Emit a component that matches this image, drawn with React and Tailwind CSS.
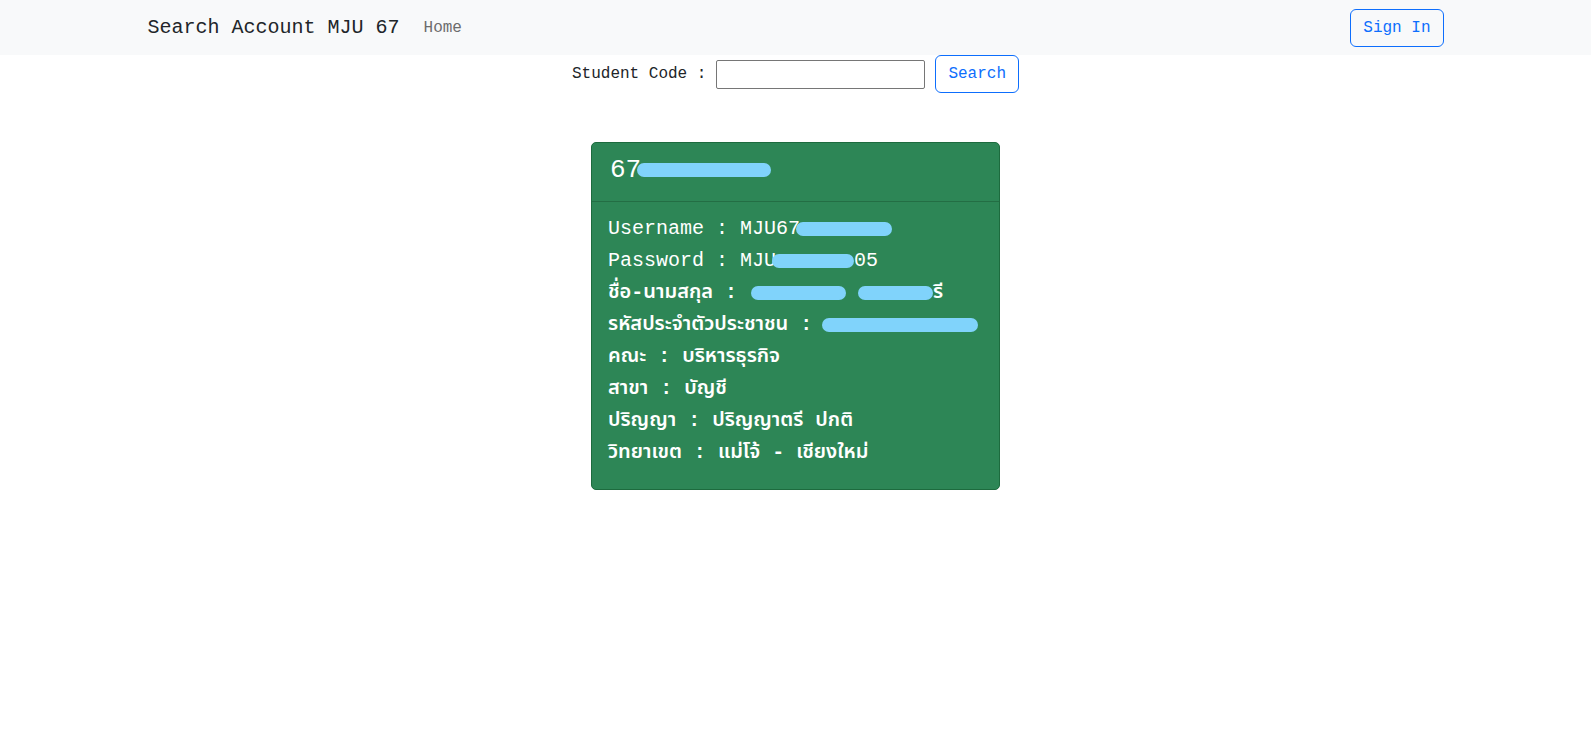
export default function App() {
  const mono = "font-['Liberation_Mono','Noto_Sans_Thai','Noto_Sans','DejaVu_Sans',monospace]";
  const Pill = ({ w, ml = 0 }) => (
    <span
      className="inline-block h-[14px] rounded-full bg-[#80d3fb] align-middle"
      style={{ width: w, marginLeft: ml }}
    />
  );

  return (
    <div className={`min-h-screen bg-white ${mono}`}>
      <nav className="bg-[#f8f9fa] h-[55px]">
        <div className="max-w-[1320px] mx-auto px-3 h-full flex items-center justify-between">
          <div className="flex items-center">
            <span className="text-[20px] text-[#212529]">Search Account MJU 67</span>
            <span className="ml-[24px] text-[16px] text-[#6c6c6c]">Home</span>
          </div>
          <button className="h-[38px] px-3 border border-[#0d6efd] rounded-[6px] text-[16px] text-[#0d6efd]">
            Sign In
          </button>
        </div>
      </nav>

      <div className="flex justify-center items-center gap-[10px]">
        <span className="text-[16px] text-[#212529]">Student Code :</span>
        <input className="w-[209px] h-[29px] border border-[#767676] rounded-[2px] outline-none" />
        <button className="h-[38px] px-3 border border-[#0d6efd] rounded-[6px] text-[16px] text-[#0d6efd]">
          Search
        </button>
      </div>

      <div className="mt-[49px] flex justify-center">
        <div className="w-[409px] bg-[#2d8656] border border-[#1d6b3e] rounded-[5px] text-white">
          <div className="h-[59px] px-[18px] pt-[12px] border-b border-[#236e44] text-[26px] leading-[30px]">
            67<Pill w={134} ml={-4} />
          </div>
          <div className="px-[16px] pt-[11px] pb-[20px] text-[20px] leading-[32px] whitespace-nowrap">
            <div>Username : MJU67<Pill w={96} ml={-4} /></div>
            <div>Password : MJU<Pill w={82} ml={-4} />05</div>
            <div className="font-semibold">
              ชื่อ-นามสกุล : <Pill w={95} ml={2} /><Pill w={75} ml={12} />รี
            </div>
            <div className="font-semibold">
              รหัสประจำตัวประชาชน :<Pill w={156} ml={10} />
            </div>
            <div className="font-semibold">คณะ : บริหารธุรกิจ</div>
            <div className="font-semibold">สาขา : บัญชี</div>
            <div className="font-semibold">ปริญญา : ปริญญาตรี ปกติ</div>
            <div className="font-semibold">วิทยาเขต : แม่โจ้ - เชียงใหม่</div>
          </div>
        </div>
      </div>
    </div>
  );
}
